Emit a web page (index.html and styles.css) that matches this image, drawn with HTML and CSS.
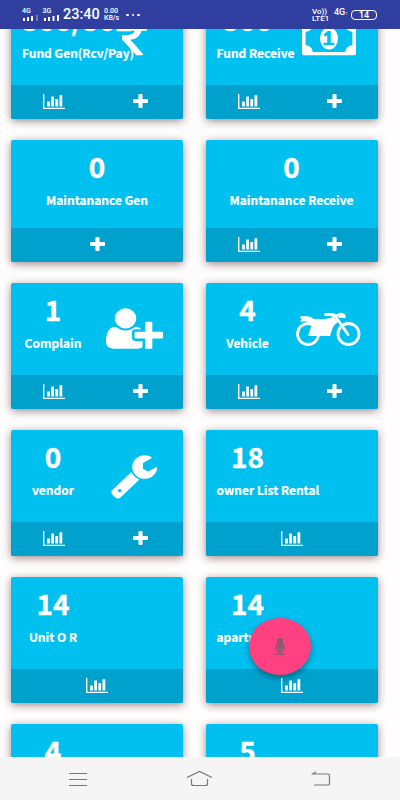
FILE: index.html
```
<!DOCTYPE html>
<html lang="en">
<head>
    <meta charset="UTF-8">
    <meta name="viewport" content="width=device-width, initial-scale=1.0">
    <title>Society Dashboard</title>
    <link rel="stylesheet" href="styles.css">
</head>
<body>
    <svg class="defs">
        <symbol id="chart" viewBox="0 128 2048 1536" preserveAspectRatio="none"><path d="M640 896v512h-256v-512h256zm384-512v1024h-256v-1024h256zm1024 1152v128h-2048v-1536h128v1408h1920zm-640-896v768h-256v-768h256zm384-384v1152h-256v-1152h256z"/></symbol>
        <symbol id="plus" viewBox="192 128 1408 1408" preserveAspectRatio="none"><path d="M1600 736v192q0 40-28 68t-68 28h-416v416q0 40-28 68t-68 28h-192q-40 0-68-28t-28-68v-416h-416q-40 0-68-28t-28-68v-192q0-40 28-68t68-28h416v-416q0-40 28-68t68-28h192q40 0 68 28t28 68v416h416q40 0 68 28t28 68z"/></symbol>
    </svg>

    <header class="status-bar">
        <div class="signal">
            <span>4G</span>
            <svg width="16" height="6"><path d="M1 3h2v3h-2zM5 2h2v4h-2zM9 1h2v5h-2z"/><path class="dim" d="M14 0h2v6h-2z"/></svg>
        </div>
        <div class="signal">
            <span>3G</span>
            <svg width="17" height="6"><path d="M1 3h2v3h-2zM5 2h2v4h-2zM9.500 1h2v5h-2zM14 0h2v6h-2z"/></svg>
        </div>
        <div class="clock">23:40</div>
        <div class="speed"><span>0.00</span><span>KB/s</span></div>
        <div class="dots"><i></i><i></i><i></i></div>
        <div class="volte"><span>Vo))</span><span>LTE1</span></div>
        <div class="net">4G<small>↑</small></div>
        <div class="battery">14</div>
    </header>

    <main class="content">
        <div class="grid">
            <div class="card">
                <div class="card-body">
                    <div class="stat"><h3>500/5025</h3><p>Fund Gen(Rcv/Pay)</p></div>
                    <div class="icon"><svg width="25" height="47" viewBox="0 0 898 1792" preserveAspectRatio="none"><path d="M898 470v102q0 14-9 23t-23 9h-168q-23 144-129 234t-276 110q167 178 459 536q14 16 4 34q-8 18-29 18h-195q-16 0-25-12q-306-367-498-571q-9-9-9-22v-127q0-13 9.500-22.500t22.500-9.500h112q132 0 212.500-43t102.500-125h-427q-14 0-23-9t-9-23v-102q0-14 9-23t23-9h413q-57-113-268-113h-145q-13 0-22.500-9.500t-9.500-22.500v-133q0-14 9-23t23-9h832q14 0 23 9t9 23v102q0 14-9 23t-23 9h-233q47 61 64 144h171q14 0 23 9t9 23z"/></svg></div>
                </div>
                <div class="card-footer"><a><svg class="chart"><use href="#chart"/></svg></a><a><svg class="plus"><use href="#plus"/></svg></a></div>
            </div>

            <div class="card">
                <div class="card-body">
                    <div class="stat"><h3>500</h3><p>Fund Receive</p></div>
                    <div class="icon"><svg width="54" height="47" viewBox="0 0 1920 1792" preserveAspectRatio="none"><path d="M768 1152h384v-96h-128v-448h-114l-148 137 77 80q42-37 55-57h2v288h-128v96zm512-256q0 70-21 142t-59.500 134-101.500 101-138 39-138-39-101.500-101-59.500-134-21-142 21-142 59.500-134 101.500-101 138-39 138 39 101.500 101 59.500 134 21 142zm512 256v-512q-106 0-181-75t-75-181h-1152q0 106-75 181t-181 75v512q106 0 181 75t75 181h1152q0-106 75-181t181-75zm128-832v1152q0 26-19 45t-45 19h-1792q-26 0-45-19t-19-45v-1152q0-26 19-45t45-19h1792q26 0 45 19t19 45z" fill-rule="evenodd"/></svg></div>
                </div>
                <div class="card-footer"><a><svg class="chart"><use href="#chart"/></svg></a><a><svg class="plus"><use href="#plus"/></svg></a></div>
            </div>

            <div class="card">
                <div class="card-body centered">
                    <div class="stat"><h3>0</h3><p>Maintanance Gen</p></div>
                </div>
                <div class="card-footer"><a><svg class="plus"><use href="#plus"/></svg></a></div>
            </div>

            <div class="card">
                <div class="card-body centered">
                    <div class="stat"><h3>0</h3><p>Maintanance Receive</p></div>
                </div>
                <div class="card-footer"><a><svg class="chart"><use href="#chart"/></svg></a><a><svg class="plus"><use href="#plus"/></svg></a></div>
            </div>

            <div class="card">
                <div class="card-body">
                    <div class="stat"><h3>1</h3><p>Complain</p></div>
                    <div class="icon"><svg width="57" height="47" viewBox="0 0 2048 1792" preserveAspectRatio="none"><path d="M704 896q-159 0-271.500-112.500t-112.500-271.500 112.500-271.500 271.500-112.500 271.500 112.500 112.500 271.500-112.500 271.500-271.500 112.500zm960 128h352q13 0 22.500 9.500t9.500 22.500v192q0 13-9.500 22.500t-22.500 9.500h-352v352q0 13-9.500 22.500t-22.500 9.500h-192q-13 0-22.500-9.500t-9.500-22.500v-352h-352q-13 0-22.500-9.500t-9.500-22.500v-192q0-13 9.500-22.500t22.500-9.500h352v-352q0-13 9.500-22.500t22.500-9.500h192q13 0 22.500 9.500t9.500 22.500v352zm-736 224q0 52 38 90t90 38h256v238q-68 50-171 50h-874q-121 0-194-69t-73-190q0-53 3.500-103.500t14-109 26.500-108.500 43-97.500 62-81 85.500-53.500 111.500-20q19 0 39 17 79 61 154.500 91.500t164.500 30.500 164.500-30.500 154.500-91.500q20-17 39-17 132 0 217 96h-223q-52 0-90 38t-38 90v192z"/></svg></div>
                </div>
                <div class="card-footer"><a><svg class="chart"><use href="#chart"/></svg></a><a><svg class="plus"><use href="#plus"/></svg></a></div>
            </div>

            <div class="card">
                <div class="card-body">
                    <div class="stat"><h3>4</h3><p>Vehicle</p></div>
                    <div class="icon"><svg width="65" height="47" viewBox="0 0 65 47">
                        <g class="lines"><circle cx="12" cy="29" r="10.500"/><circle cx="52.500" cy="29" r="10.500"/><path d="M5.500 12.500q8-.5 12 3h19M29.500 9.500h7q2 0 3 2l12.500 18M37 11.500l6-1.500"/></g>
                        <path d="M17 14q9 2 13 0q4-2 8-1.500l4 4.500q-5 3-6 8l-2 6h-22l3-9l2-3q-6-4-13-2q1-3 5-4zM42 8.500q3-1.500 7 .5l1 4h-7z"/>
                    </svg></div>
                </div>
                <div class="card-footer"><a><svg class="chart"><use href="#chart"/></svg></a><a><svg class="plus"><use href="#plus"/></svg></a></div>
            </div>

            <div class="card">
                <div class="card-body">
                    <div class="stat"><h3>0</h3><p>vendor</p></div>
                    <div class="icon"><svg width="50" height="47" viewBox="0 0 1792 1792" preserveAspectRatio="none"><path d="M448 1472q0-26-19-45t-45-19-45 19-19 45 19 45 45 19 45-19 19-45zm644-420l-682 682q-37 37-90 37-52 0-91-37l-106-108q-38-36-38-90 0-53 38-91l681-681q39 98 114.500 173.500t173.500 114.500zm634-435q0 39-23 106-47 134-164.500 217.500t-258.500 83.500q-185 0-316.500-131.500t-131.500-316.500 131.500-316.500 316.500-131.500q58 0 121.500 16.500t107.500 46.500q16 11 16 28t-16 28l-293 169v224l193 107q5-3 79-48.500t135.500-81 70.500-35.500q15 0 23.500 10t8.500 25z"/></svg></div>
                </div>
                <div class="card-footer"><a><svg class="chart"><use href="#chart"/></svg></a><a><svg class="plus"><use href="#plus"/></svg></a></div>
            </div>

            <div class="card">
                <div class="card-body">
                    <div class="stat"><h3>18</h3><p>owner List Rental</p></div>
                </div>
                <div class="card-footer"><a><svg class="chart"><use href="#chart"/></svg></a></div>
            </div>

            <div class="card">
                <div class="card-body">
                    <div class="stat"><h3>14</h3><p>Unit O R</p></div>
                </div>
                <div class="card-footer"><a><svg class="chart"><use href="#chart"/></svg></a></div>
            </div>

            <div class="card">
                <div class="card-body">
                    <div class="stat"><h3>14</h3><p>apartment</p></div>
                </div>
                <div class="card-footer"><a><svg class="chart"><use href="#chart"/></svg></a></div>
            </div>

            <div class="card">
                <div class="card-body">
                    <div class="stat"><h3>4</h3></div>
                </div>
            </div>

            <div class="card">
                <div class="card-body">
                    <div class="stat"><h3>5</h3></div>
                </div>
            </div>
        </div>
    </main>

    <button class="mic-button">
        <svg width="12" height="18"><rect x="3" y="0" width="6" height="11" rx="2"/><path d="M1 7h1.500q0 5 3.500 5t3.500-5h1.500q0 6-4 6.700v1.800h3v1.500h-8v-1.500h3v-1.800q-4-.7-4-6.700z"/></svg>
    </button>

    <nav class="nav-bar">
        <svg width="20" height="14"><path d="M1 1.500h18M1 7.500h18M1 13.500h18"/></svg>
        <svg width="27" height="17"><path d="M1 7.500L13.500 1.500L26 7.500M5.500 9v4.500q0 2 2 2h12q2 0 2-2v-4.500"/></svg>
        <svg width="20" height="16"><path d="M5 1L1.500 3h15.500q1.500 0 1.500 1.500v8q0 1.500-1.500 1.500h-14"/></svg>
    </nav>
</body>
</html>
```
FILE: styles.css
```
:root {
    --status-color: #303f9f;
    --card-color: #00c0ef;
    --footer-color: #00a2cd;
    --accent-color: #ff4081;
    --nav-bg: #f5f5f5;
}
* {
    margin: 0;
    padding: 0;
    box-sizing: border-box;
}
body {
    display: flex;
    flex-direction: column;
    height: 800px;
    overflow: hidden;
    font-family: "Noto Sans CJK SC", "Noto Sans", sans-serif;
    background-color: #fffdfd;
    color: #fff;
}
svg {
    display: block;
    fill: #fff;
}
.defs {
    position: absolute;
    width: 0;
    height: 0;
}

/* status bar */
.status-bar {
    display: flex;
    align-items: center;
    height: 29px;
    flex-shrink: 0;
    padding: 0 23px 0 22px;
    background-color: var(--status-color);
    font-family: Roboto, sans-serif;
    font-weight: 500;
}
.signal {
    display: flex;
    flex-direction: column;
    width: 20.500px;
    font-size: 7px;
    line-height: 7px;
}
.signal .dim {
    opacity: 0.3;
}
.clock {
    width: 41px;
    font-size: 14.500px;
    line-height: 30px;
}
.speed, .volte {
    display: flex;
    flex-direction: column;
    font-size: 7px;
    line-height: 7px;
}
.speed {
    width: 22px;
}
.dots {
    display: flex;
    gap: 3px;
    padding-top: 1px;
}
.dots i {
    width: 2.500px;
    height: 2.500px;
    border-radius: 50%;
    background-color: #fff;
}
.volte {
    margin-left: auto;
    width: 22px;
    font-size: 8px;
    line-height: 7px;
}
.net {
    width: 17px;
    font-size: 9px;
    line-height: 10px;
    padding-bottom: 4px;
}
.net small {
    font-size: 5px;
}
.battery {
    width: 26px;
    height: 10px;
    border: 1px solid #fff;
    border-radius: 4px;
    font-size: 9px;
    line-height: 8px;
    text-align: center;
}

/* cards */
.content {
    flex: 1;
    overflow: hidden;
}
.grid {
    display: grid;
    grid-template-columns: 172px 172px;
    gap: 21px 22.500px;
    margin: -36px 0 0 11px;
}
.card {
    border-radius: 2px;
    background-color: var(--card-color);
    box-shadow: 0 2px 8px rgba(60, 20, 20, 0.5);
}
.card-body {
    display: flex;
    height: 92px;
    padding: 9px 11px 0;
}
.card-body.centered {
    height: 88px;
    justify-content: center;
}
.stat {
    display: grid;
    grid-template-columns: minmax(62px, max-content);
    align-content: start;
    width: 62px;
    white-space: nowrap;
    text-align: center;
}
.stat h3, .stat p {
    min-width: 62px;
    justify-self: start;
    font-weight: bold;
}
.centered .stat {
    width: auto;
}
.centered .stat h3 {
    justify-self: center;
}
.stat h3 {
    font-size: 28px;
    line-height: 34px;
    -webkit-text-stroke: 0.4px #fff;
}
.stat p {
    margin-top: 8px;
    font-size: 12px;
    line-height: 18px;
    -webkit-text-stroke: 0.2px #fff;
}
.icon {
    display: flex;
    flex: 1;
    justify-content: center;
    margin-right: -12px;
    padding-top: 12.500px;
}
.card-footer {
    display: flex;
    height: 34px;
    padding-bottom: 2px;
    border-radius: 0 0 2px 2px;
    background-color: var(--footer-color);
}
.card-footer a {
    display: flex;
    flex: 1;
    justify-content: center;
    align-items: center;
}
.chart {
    width: 22px;
    height: 15px;
}
.plus {
    width: 15px;
    height: 14px;
}
.lines {
    fill: none;
    stroke: #fff;
    stroke-width: 2.800;
    stroke-linecap: round;
}

/* floating mic */
.mic-button {
    position: absolute;
    left: 249px;
    top: 618px;
    display: flex;
    align-items: center;
    justify-content: center;
    width: 62px;
    height: 57px;
    border: none;
    border-radius: 50%;
    background-color: var(--accent-color);
    box-shadow: 0 3px 6px rgba(0, 0, 0, 0.35);
}
.mic-button svg {
    fill: #8a5a70;
}

/* bottom navigation */
.nav-bar {
    display: flex;
    align-items: center;
    justify-content: space-between;
    height: 43px;
    flex-shrink: 0;
    padding: 0 69px 0 68px;
    background-color: var(--nav-bg);
}
.nav-bar svg {
    fill: none;
    stroke: #777;
    stroke-width: 1.200;
}
```
